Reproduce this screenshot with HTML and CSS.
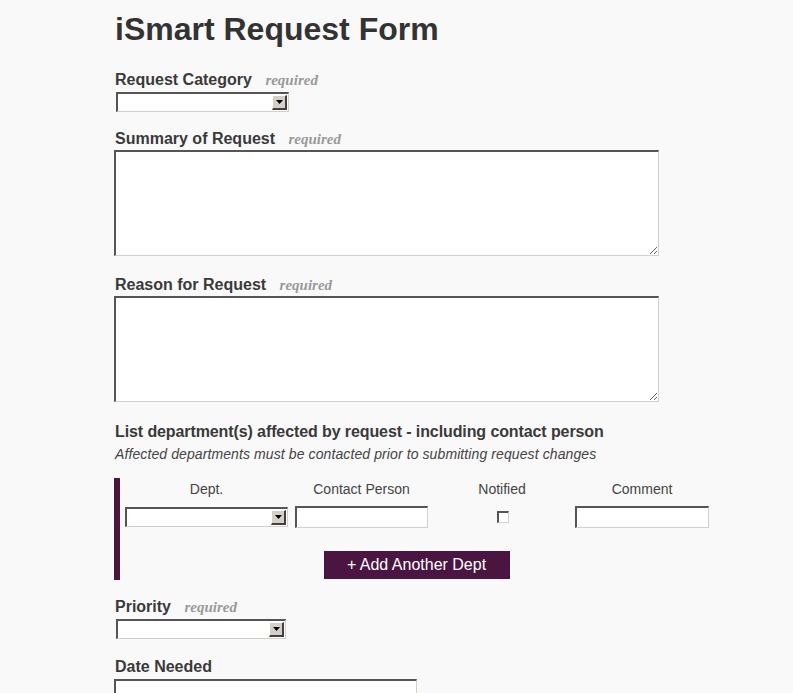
FILE: index.html
```html
<!DOCTYPE html>
<html lang="en">
<head>
<meta charset="utf-8">
<title>iSmart Request Form</title>
<link rel="stylesheet" href="styles.css">
</head>
<body>
<div class="page">
  <h1 class="title">iSmart Request Form</h1>

  <div class="field f-cat">
    <div class="lbl">Request Category <span class="req">required</span></div>
    <div class="sel sel-cat"><span class="sel-val"></span><span class="sel-btn"><svg width="7" height="4" viewBox="0 0 7 4"><path d="M0 0h7L3.5 4z" fill="#000"/></svg></span></div>
  </div>

  <div class="field f-sum">
    <div class="lbl">Summary of Request <span class="req">required</span></div>
    <textarea class="ta"></textarea>
  </div>

  <div class="field f-rea">
    <div class="lbl">Reason for Request <span class="req">required</span></div>
    <textarea class="ta"></textarea>
  </div>

  <div class="field f-dept">
    <div class="lbl lbl-long">List department(s) affected by request - including contact person</div>
    <div class="note">Affected departments must be contacted prior to submitting request changes</div>
    <div class="dept">
      <div class="dept-grid">
        <div class="th">Dept.</div>
        <div class="th">Contact Person</div>
        <div class="th">Notified</div>
        <div class="th">Comment</div>
        <div class="td"><div class="sel sel-dept"><span class="sel-val"></span><span class="sel-btn"><svg width="7" height="4" viewBox="0 0 7 4"><path d="M0 0h7L3.5 4z" fill="#000"/></svg></span></div></div>
        <div class="td"><input class="inp inp-contact" type="text"></div>
        <div class="td"><span class="chk"></span></div>
        <div class="td"><input class="inp inp-comment" type="text"></div>
      </div>
      <div class="btn-row"><button class="add-btn" type="button">+ Add Another Dept</button></div>
    </div>
  </div>

  <div class="field f-pri">
    <div class="lbl">Priority <span class="req">required</span></div>
    <div class="sel sel-pri"><span class="sel-val"></span><span class="sel-btn"><svg width="7" height="4" viewBox="0 0 7 4"><path d="M0 0h7L3.5 4z" fill="#000"/></svg></span></div>
  </div>

  <div class="field f-date">
    <div class="lbl">Date Needed</div>
    <input class="inp inp-date" type="text">
  </div>
</div>
</body>
</html>
```

FILE: styles.css
```css
html, body {
  margin: 0;
  padding: 0;
  background: #f9f9f9;
}
body {
  font-family: "Liberation Sans", Arial, sans-serif;
  color: #333;
  overflow: hidden;
}
.page {
  margin-left: 114px;
  padding-top: 11px;
}
.title {
  margin: 0;
  font-size: 32px;
  line-height: 36px;
  font-weight: bold;
  color: #333;
  padding-left: 1px;
}
.f-cat { margin-top: 24px; }
.f-sum { margin-top: 18px; }
.f-rea { margin-top: 20px; }
.f-dept { margin-top: 21px; }
.f-pri { margin-top: 18px; }
.f-date { margin-top: 19px; }

.lbl {
  font-size: 16px;
  line-height: 18px;
  font-weight: bold;
  color: #3a3a3a;
  padding-left: 1px;
  white-space: nowrap;
}
.lbl-long { letter-spacing: -0.1px; }
.req {
  font-family: "Liberation Serif", "Times New Roman", serif;
  font-style: italic;
  font-weight: bold;
  font-size: 15px;
  color: #999;
  margin-left: 9px;
}
.note {
  margin-top: 5px;
  font-size: 14px;
  line-height: 16px;
  font-style: italic;
  color: #444;
  padding-left: 1px;
  letter-spacing: 0.1px;
  white-space: nowrap;
}

/* classic inset select */
.sel {
  display: flex;
  align-items: center;
  box-sizing: border-box;
  height: 20px;
  background: #fff;
  border-style: solid;
  border-width: 2px 1px 1px 2px;
  border-color: #555 #d4d0c8 #d4d0c8 #555;
}
.sel-val { flex: 1; }
.sel-btn {
  box-sizing: border-box;
  width: 15px;
  height: 15px;
  margin-right: 1px;
  background: #d4d0c8;
  border-style: solid;
  border-width: 1px 2px 2px 1px;
  border-color: #fff #404040 #404040 #fff;
  display: flex;
  align-items: center;
  justify-content: center;
}
.sel-btn svg { display: block; }
.f-cat .sel, .f-pri .sel { margin-top: 3px; margin-left: 2px; }
.sel-cat { width: 173px; }
.sel-pri { width: 170px; }
.sel-dept { width: 163px; }

.ta {
  display: block;
  box-sizing: border-box;
  margin: 2px 0 0 0;
  width: 545px;
  height: 106px;
  padding: 2px;
  background: #fff;
  border-style: solid;
  border-width: 2px 1px 1px 2px;
  border-color: #555 #d4d0c8 #d4d0c8 #555;
  font-family: "Liberation Sans", Arial, sans-serif;
  font-size: 13px;
  outline: none;
}

.inp {
  display: block;
  box-sizing: border-box;
  height: 22px;
  margin: 0;
  padding: 1px 3px;
  background: #fff;
  border-style: solid;
  border-width: 2px 1px 1px 2px;
  border-color: #555 #d4d0c8 #d4d0c8 #555;
  font-family: "Liberation Sans", Arial, sans-serif;
  font-size: 13px;
  outline: none;
}
.inp-contact { width: 133px; }
.inp-comment { width: 134px; }
.inp-date { width: 303px; margin-top: 3px; height: 24px; }

.dept {
  margin-top: 16px;
  border-left: 6px solid #4b1541;
  padding: 3px 0 1px 1px;
  width: 591px;
}
.dept-grid {
  display: grid;
  grid-template-columns: 171px 139px 142px 138px;
  row-gap: 9px;
}
.th {
  text-align: center;
  font-size: 14px;
  line-height: 16px;
  color: #444;
}
.td {
  display: flex;
  justify-content: center;
  align-items: center;
  height: 22px;
}
.chk {
  box-sizing: border-box;
  width: 12px;
  height: 12px;
  background: #fff;
  border-style: solid;
  border-width: 2px 1px 1px 2px;
  border-color: #555 #d4d0c8 #d4d0c8 #555;
  margin-left: 1px;
}
.btn-row {
  display: flex;
  justify-content: center;
  margin-top: 23px;
}
.add-btn {
  width: 186px;
  height: 28px;
  margin: 0;
  padding: 0;
  border: none;
  background: #4b1541;
  color: #fff;
  font-family: "Liberation Sans", Arial, sans-serif;
  font-size: 16px;
  cursor: pointer;
}
```
